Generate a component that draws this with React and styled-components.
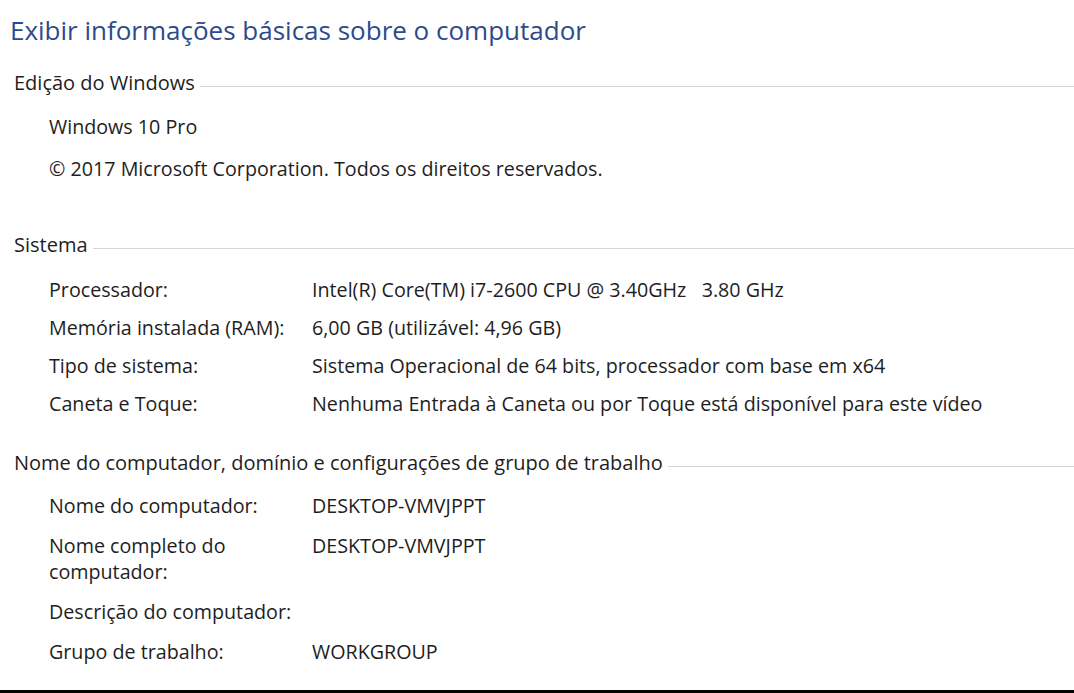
import { Fragment } from "react";
import styled, { createGlobalStyle } from "styled-components";

const GlobalStyle = createGlobalStyle`
  html, body {
    margin: 0;
    padding: 0;
    background: #fff;
  }
  body {
    font-family: "Open Sans", "Noto Sans", "Liberation Sans", sans-serif;
    color: #1e1e1e;
  }
`;

const Page = styled.div`
  width: 1074px;
  height: 693px;
  box-sizing: border-box;
  background: #fff;
  border-bottom: 3px solid #000;
  overflow: hidden;
  display: flex;
  flex-direction: column;
`;

const Title = styled.h1`
  margin: 12px 0 0 10px;
  font-size: 26px;
  font-weight: 400;
  line-height: 36px;
  color: #2d4b8c;
`;

const Section = styled.section`
  display: flex;
  flex-direction: column;
  margin-top: ${(p) => p.gap || 0}px;
`;

// heading with the thin rule running to the right edge
const SectionHead = styled.div`
  display: flex;
  align-items: center;
  padding-left: 14px;
  font-size: 20px;
  line-height: 28px;
  white-space: nowrap;
  &::after {
    content: "";
    flex: 1;
    height: 1px;
    margin-left: 5px;
    margin-top: 7px;
    background: #d5d5d5;
  }
`;

const Lines = styled.div`
  padding: 9px 0 0 49px;
  font-size: 19.7px;
  line-height: 42px;
`;

const Rows = styled.div`
  display: grid;
  grid-template-columns: 263px 1fr;
  padding-left: 49px;
  margin-top: ${(p) => p.top || 0}px;
  font-size: 19.7px;
`;

const Cell = styled.div`
  line-height: 26px;
  padding: ${(p) => p.pad}px 0;
  white-space: pre;
`;

const Label = styled(Cell)`
  white-space: normal;
  padding-right: 20px;
`;

const system = [
  ["Processador:", "Intel(R) Core(TM) i7-2600 CPU @ 3.40GHz   3.80 GHz"],
  ["Memória instalada (RAM):", "6,00 GB (utilizável: 4,96 GB)"],
  ["Tipo de sistema:", "Sistema Operacional de 64 bits, processador com base em x64"],
  ["Caneta e Toque:", "Nenhuma Entrada à Caneta ou por Toque está disponível para este vídeo"],
];

const computer = [
  ["Nome do computador:", "DESKTOP-VMVJPPT"],
  ["Nome completo do computador:", "DESKTOP-VMVJPPT"],
  ["Descrição do computador:", ""],
  ["Grupo de trabalho:", "WORKGROUP"],
];

function InfoRows({ items, top, pad }) {
  return (
    <Rows top={top}>
      {items.map(([label, value]) => (
        <Fragment key={label}>
          <Label pad={pad}>{label}</Label>
          <Cell pad={pad}>{value}</Cell>
        </Fragment>
      ))}
    </Rows>
  );
}

export default function App() {
  return (
    <>
      <GlobalStyle />
      <Page>
        <Title>Exibir informações básicas sobre o computador</Title>
        <Section gap={21}>
          <SectionHead>Edição do Windows</SectionHead>
          <Lines>
            <div>Windows 10 Pro</div>
            <div>© 2017 Microsoft Corporation. Todos os direitos reservados.</div>
          </Lines>
        </Section>
        <Section gap={41}>
          <SectionHead>Sistema</SectionHead>
          <InfoRows items={system} top={12} pad={6} />
        </Section>
        <Section gap={26}>
          <SectionHead>Nome do computador, domínio e configurações de grupo de trabalho</SectionHead>
          <InfoRows items={computer} top={9} pad={7} />
        </Section>
      </Page>
    </>
  );
}
